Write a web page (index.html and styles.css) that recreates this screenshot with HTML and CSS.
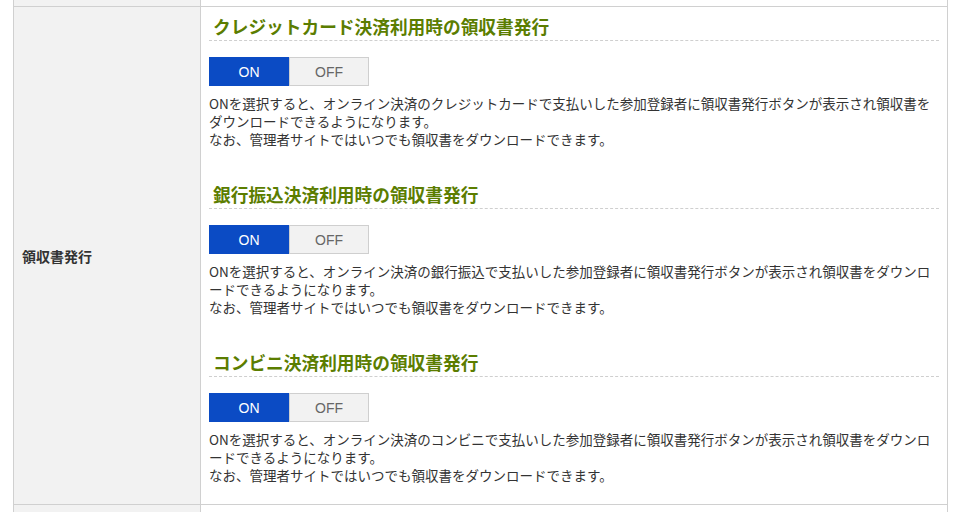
FILE: index.html
```html
<!DOCTYPE html>
<html lang="ja">
<head>
<meta charset="utf-8">
<link rel="stylesheet" href="styles.css">
</head>
<body>
<div class="table">
  <div class="row row-top">
    <div class="th"></div>
    <div class="td"></div>
  </div>
  <div class="row">
    <div class="th"><span class="label">領収書発行</span></div>
    <div class="td main">
      <div class="section">
        <h3 class="heading">クレジットカード決済利用時の領収書発行</h3>
        <div class="toggle">
          <span class="btn on">ON</span><span class="btn off">OFF</span>
        </div>
        <p class="desc">ONを選択すると、オンライン決済のクレジットカードで支払いした参加登録者に領収書発行ボタンが表示され領収書をダウンロードできるようになります。<br>なお、管理者サイトではいつでも領収書をダウンロードできます。</p>
      </div>
      <div class="section">
        <h3 class="heading">銀行振込決済利用時の領収書発行</h3>
        <div class="toggle">
          <span class="btn on">ON</span><span class="btn off">OFF</span>
        </div>
        <p class="desc">ONを選択すると、オンライン決済の銀行振込で支払いした参加登録者に領収書発行ボタンが表示され領収書をダウンロードできるようになります。<br>なお、管理者サイトではいつでも領収書をダウンロードできます。</p>
      </div>
      <div class="section">
        <h3 class="heading">コンビニ決済利用時の領収書発行</h3>
        <div class="toggle">
          <span class="btn on">ON</span><span class="btn off">OFF</span>
        </div>
        <p class="desc">ONを選択すると、オンライン決済のコンビニで支払いした参加登録者に領収書発行ボタンが表示され領収書をダウンロードできるようになります。<br>なお、管理者サイトではいつでも領収書をダウンロードできます。</p>
      </div>
    </div>
  </div>
  <div class="row row-bottom">
    <div class="th"></div>
    <div class="td"></div>
  </div>
</div>
</body>
</html>
```

FILE: styles.css
```css
* { box-sizing: border-box; }
html, body {
  margin: 0;
  padding: 0;
  background: #fff;
  overflow: hidden;
}
body {
  font-family: "Noto Sans CJK JP", "Noto Sans", sans-serif;
  color: #333;
  height: 512px;
}
.table {
  margin-left: 13px;
  width: 935px;
  border-left: 1px solid #d0d0d0;
  border-right: 1px solid #d0d0d0;
  margin-top: -1px;
}
.row {
  display: grid;
  grid-template-columns: 187px 1fr;
  border-top: 1px solid #d0d0d0;
}
.row-top {
  height: 7px;
}
.row-bottom {
  height: 20px;
}
.th {
  background: #f2f2f2;
  border-right: 1px solid #d0d0d0;
  display: flex;
  align-items: center;
  padding-left: 8px;
}
.label {
  font-size: 14px;
  font-weight: bold;
  color: #333;
}
.td {
  background: #fff;
}
.main {
  padding: 8px 8px 20px 8px;
}
.section {
  margin-bottom: 35px;
}
.section:last-child {
  margin-bottom: 0;
}
.heading {
  margin: 0;
  font-size: 17.7px;
  font-weight: bold;
  line-height: 22px;
  color: #5b7d00;
  padding: 0 0 3px 4px;
  border-bottom: 1px dashed #cfcfcf;
}
.toggle {
  display: flex;
  margin-top: 16px;
}
.btn {
  display: flex;
  align-items: center;
  justify-content: center;
  width: 80px;
  height: 29px;
  font-family: "Liberation Sans", Arial, sans-serif;
  font-size: 14px;
}
.on {
  background: #0b4bc4;
  color: #fff;
}
.off {
  background: #f2f2f2;
  color: #666;
  border: 1px solid #cfcfcf;
}
.desc {
  margin: 8px 0 0;
  font-size: 13.5px;
  line-height: 18px;
  color: #333;
}
```
